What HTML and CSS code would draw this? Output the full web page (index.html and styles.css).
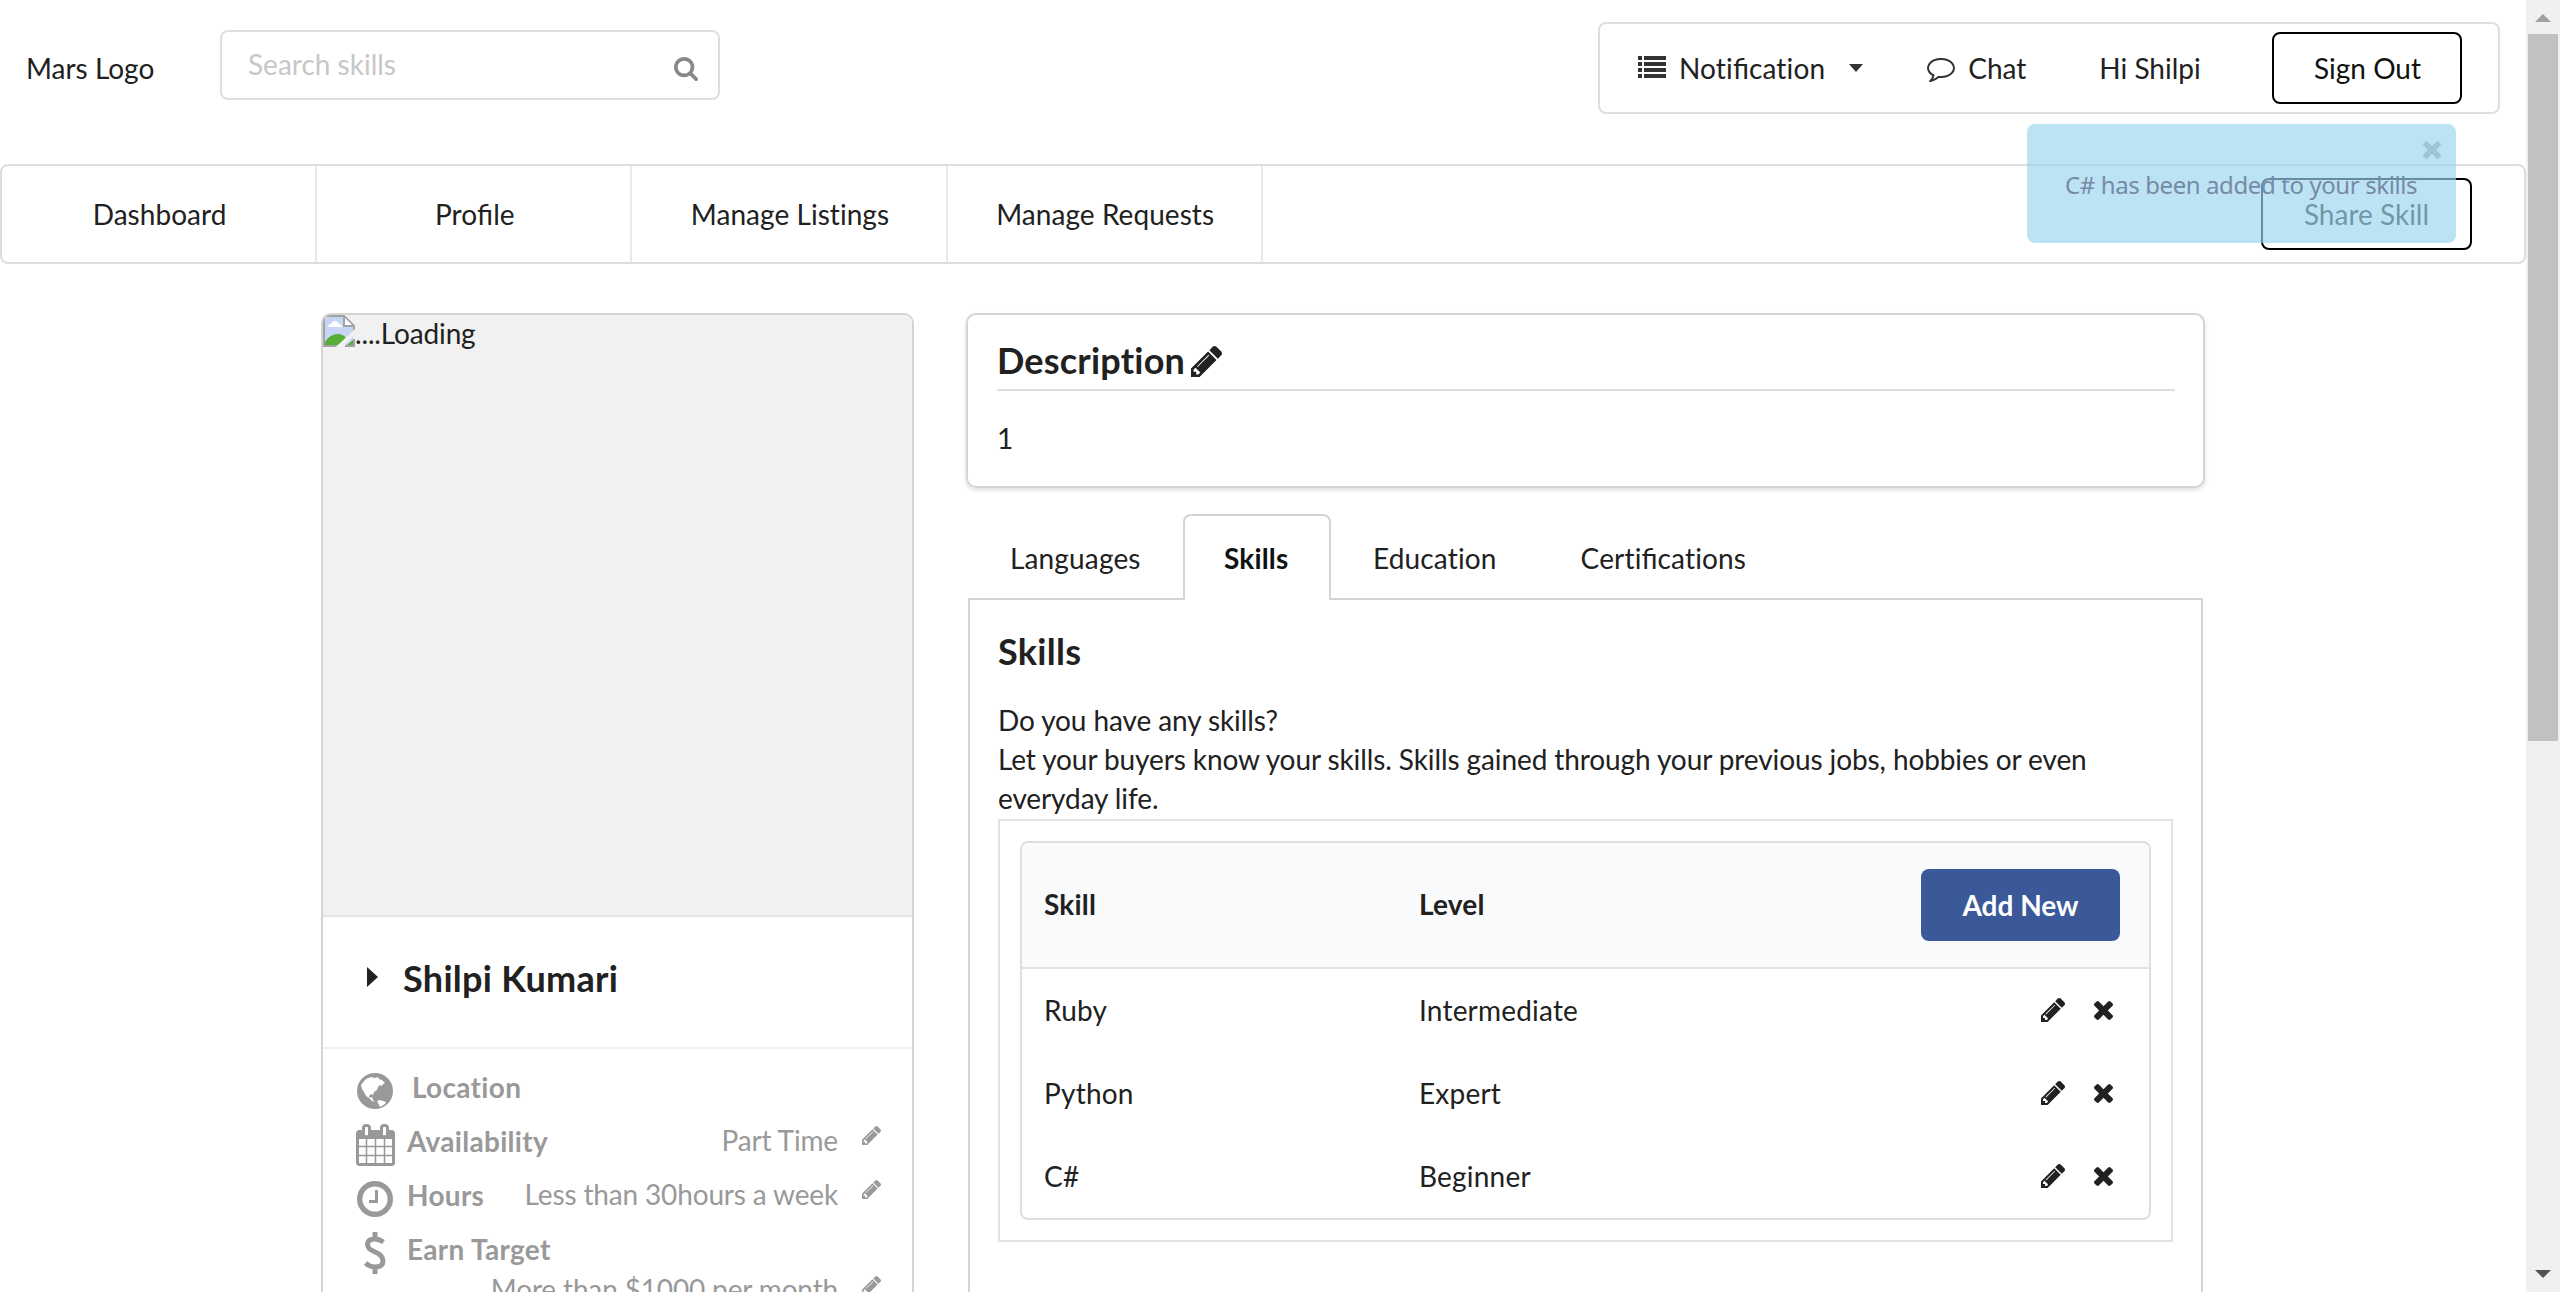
FILE: index.html
```html
<!DOCTYPE html>
<html lang="en">
<head>
<meta charset="utf-8">
<title>Profile</title>
<link rel="stylesheet" href="styles.css">
</head>
<body>
<svg class="sprite" aria-hidden="true">
  <symbol id="pencil" viewBox="128 149 1515 1515"><path d="M491 1536l91-91-235-235-91 91v107h128v128h107zm523-928q0-22-22-22-10 0-17 7l-542 542q-7 7-7 17 0 22 22 22 10 0 17-7l542-542q7-7 7-17zm-54-192l416 416-832 832h-416v-416zm683 96q0 53-37 90l-166 166-416-416 166-165q36-38 90-38 53 0 91 38l235 234q37 39 37 91z"/></symbol>
  <symbol id="times" viewBox="302 366 1188 1188"><path d="M1490 1322q0 40-28 68l-136 136q-28 28-68 28t-68-28l-294-294-294 294q-28 28-68 28t-68-28l-136-136q-28-28-28-68t28-68l294-294-294-294q-28-28-28-68t28-68l136-136q28-28 68-28t68 28l294 294 294-294q28-28 68-28t68 28l136 136q28 28 28 68t-28 68l-294 294 294 294q28 28 28 68z"/></symbol>
</svg>
<div class="window">
  <div class="page">
    <header class="top">
      <span class="logo">Mars Logo</span>
      <div class="search">
        <span>Search skills</span>
        <svg class="search-icon" viewBox="64 128 1664 1664"><path d="M1216 832q0-185-131.5-316.5t-316.5-131.5-316.5 131.5-131.5 316.5 131.5 316.5 316.5 131.5 316.5-131.5 131.5-316.5zm512 832q0 52-38 90t-90 38q-54 0-90-38l-343-342q-179 124-399 124-143 0-273.5-55.5t-225-150-150-225-55.5-273.5 55.5-273.5 150-225 225-150 273.5-55.5 273.5 55.5 225 150 150 225 55.5 273.5q0 220-124 399l343 343q37 37 37 90z"/></svg>
      </div>
      <div class="account">
        <svg class="list-icon" viewBox="0 0 28 22"><path d="M0 0h4v4H0zM6 0h22v4H6zM0 6h4v4H0zM6 6h22v4H6zM0 12h4v4H0zM6 12h22v4H6zM0 18h4v4H0zM6 18h22v4H6z"/></svg>
        <span class="notification">Noti<span class="lig">fi</span>cation</span>
        <svg class="caret" viewBox="0 0 14 8"><path d="M0 0h14L7 8z"/></svg>
        <svg class="chat-icon" viewBox="0 256 1792 1536"><path d="M896 384q-204 0-381.5 69.5t-282 187.5-104.5 255q0 112 71.5 213.5t201.5 175.5l87 50-27 96q-24 91-70 172 152-63 275-171l43-38 57 6q69 8 130 8 204 0 381.5-69.5t282-187.5 104.5-255-104.5-255-282-187.5-381.5-69.5zm896 512q0 174-120 321.5t-326 233-450 85.5q-70 0-145-8-198 175-460 242-49 14-114 22h-5q-15 0-27-10.5t-16-27.5v-1q-3-4-.5-12t2-10 4.5-9.5l6-9 7-8.5 8-9q7-8 31-34.5t34.5-38 31-39.5 32.5-51 27-59 26-76q-157-89-247.5-220t-90.5-281q0-174 120-321.5t326-233 450-85.5 450 85.5 326 233 120 321.5z"/></svg>
        <span class="chat">Chat</span>
        <span class="greeting">Hi Shilpi</span>
        <button class="outline sign-out">Sign Out</button>
      </div>
    </header>

    <nav class="nav">
      <a class="nav-item">Dashboard</a>
      <a class="nav-item"><span>Pro<span class="lig">fi</span>le</span></a>
      <a class="nav-item">Manage Listings</a>
      <a class="nav-item">Manage Requests</a>
      <button class="outline share">Share Skill</button>
    </nav>

    <main class="content">
      <aside class="card">
        <div class="photo">
          <svg class="broken" viewBox="0 0 32 32">
            <path fill="#c6d5f5" d="M2 2h19l9 9v19H2z"/>
            <path fill="#fff" d="M5 12q0-3 3-3 1-3 4-3t4 3q3 0 3 3z"/>
            <path fill="#56ae34" d="M2 30v-3q5-8 13-8 5 0 8 4l-8 7z"/>
            <path fill="#56ae34" d="M24 30l6-5v5z"/>
            <path fill="none" stroke="#a2a2a2" stroke-width="2" d="M31 16v-5L21 1H1v30h13M22 31h9v-7M21 1v10h10"/>
            <path fill="#fff" d="M22 3v7h7z"/>
            <path fill="#f1f1f1" d="M32 14v5L20 32h-7z"/>
          </svg><span>....Loading</span>
        </div>
        <div class="person">
          <svg class="person-caret" viewBox="0 0 11 20"><path d="M0 0l11 10L0 20z"/></svg>
          <h2>Shilpi Kumari</h2>
        </div>
        <ul class="facts">
          <li>
            <span class="fact-icon"><svg width="36" height="36" viewBox="0 0 36 36"><circle cx="18" cy="18" r="18"/><path fill="#fff" d="M8 7l3-2 4-1 2 1 4-1 1 2 3 1 3 3-2 1-1 2-2-1-2 2-1 3-3 2-1 3-2-1-2 2 1 2 2-1 1 3 2 2-3-1-3-3-3-2-2-4-2-3-1-4zM20 28l3-1 3 1 3 1-1 2-5 3-1-2z"/></svg></span>
            <b class="location">Location</b>
          </li>
          <li>
            <span class="fact-icon"><svg class="calendar" width="39" height="42" viewBox="0 0 1664 1792"><path d="M128 1664h288v-288h-288v288zm352 0h320v-288h-320v288zm-352-352h288v-320h-288v320zm352 0h320v-320h-320v320zm-352-384h288v-288h-288v288zm736 736h320v-288h-320v288zm-384-736h320v-288h-320v288zm768 736h288v-288h-288v288zm-384-352h320v-320h-320v320zm-352-864v-288q0-13-9.500-22.500t-22.500-9.500h-64q-13 0-22.500 9.500t-9.500 22.500v288q0 13 9.500 22.500t22.500 9.500h64q13 0 22.500-9.500t9.500-22.500zm736 864h288v-320h-288v320zm-384-384h320v-288h-320v288zm384 0h288v-288h-288v288zm32-480v-288q0-13-9.500-22.500t-22.500-9.500h-64q-13 0-22.500 9.500t-9.500 22.500v288q0 13 9.500 22.500t22.500 9.500h64q13 0 22.500-9.500t9.500-22.500zm384-64v1280q0 52-38 90t-90 38h-1408q-52 0-90-38t-38-90v-1280q0-52 38-90t90-38h128v-96q0-66 47-113t113-47h64q66 0 113 47t47 113v96h384v-96q0-66 47-113t113-47h64q66 0 113 47t47 113v96h128q52 0 90 38t38 90z"/></svg></span>
            <b>Availability</b>
            <span class="value">Part Time</span>
            <svg class="edit"><use href="#pencil"/></svg>
          </li>
          <li>
            <span class="fact-icon"><svg width="36" height="36" viewBox="0 0 36 36"><circle cx="18" cy="18" r="15.300" fill="none" stroke="#999" stroke-width="5.400"/><path fill="none" stroke="#999" stroke-width="3" d="M19.500 9v11.500H12"/></svg></span>
            <b>Hours</b>
            <span class="value">Less than 30hours a week</span>
            <svg class="edit"><use href="#pencil"/></svg>
          </li>
          <li class="earn">
            <span class="fact-icon"><svg class="dollar" width="22" height="42" viewBox="0 0 22 42"><path fill="none" stroke="#999" stroke-width="5" d="M11 0v6M11 36v6M19.500 10Q15 7 11 7 3.500 7 3.500 12.500 3.500 17 11 20 19 23 19 29 19 35 11 35 6 35 1.500 31"/></svg></span>
            <b>Earn Target</b>
            <span class="value">More than $1000 per month</span>
            <svg class="edit"><use href="#pencil"/></svg>
          </li>
        </ul>
      </aside>

      <section class="details">
        <div class="description">
          <h2>Description<svg class="desc-edit"><use href="#pencil"/></svg></h2>
          <p>1</p>
        </div>
        <div class="tabs">
          <a class="tab">Languages</a>
          <a class="tab active">Skills</a>
          <a class="tab">Education</a>
          <a class="tab">Certi<span class="lig">fi</span>cations</a>
        </div>
        <div class="panel">
          <h2>Skills</h2>
          <p>Do you have any skills?<br>Let your buyers know your skills. Skills gained through your previous jobs, hobbies or even<br>everyday life.</p>
          <div class="frame">
            <div class="table">
              <div class="row head"><b>Skill</b><b>Level</b><button class="add">Add New</button></div>
              <div class="row"><span>Ruby</span><span>Intermediate</span><span class="actions"><svg class="row-edit"><use href="#pencil"/></svg><svg class="row-x"><use href="#times"/></svg></span></div>
              <div class="row"><span>Python</span><span>Expert</span><span class="actions"><svg class="row-edit"><use href="#pencil"/></svg><svg class="row-x"><use href="#times"/></svg></span></div>
              <div class="row"><span>C#</span><span>Beginner</span><span class="actions"><svg class="row-edit"><use href="#pencil"/></svg><svg class="row-x"><use href="#times"/></svg></span></div>
            </div>
          </div>
        </div>
      </section>
    </main>
  </div>

  <div class="scrollbar">
    <svg class="arrow-up" viewBox="0 0 16 8"><path d="M0 8h16L8 0z"/></svg>
    <div class="thumb"></div>
    <svg class="arrow-down" viewBox="0 0 16 8"><path d="M0 0h16L8 8z"/></svg>
  </div>

  <div class="toast">
    <span>C# has been added to your skills</span>
    <svg class="toast-close"><use href="#times"/></svg>
  </div>
</div>
</body>
</html>
```
FILE: styles.css
```css
* { box-sizing: border-box; }
body {
  margin: 0;
  background: #fff;
  color: #212121;
  font: 28px/40px Lato, "Liberation Sans", sans-serif;
  font-variant-ligatures: none;
  overflow: hidden;
}
svg { display: block; flex: none; fill: currentColor; }
h2, p, ul { margin: 0; padding: 0; }
h2 { font-size: 36px; line-height: 46px; font-weight: 700; letter-spacing: .3px; }
button { font: inherit; font-variant-ligatures: none; padding: 0; }
.lig { font-variant-ligatures: common-ligatures; letter-spacing: 0; }
.sprite { position: absolute; width: 0; height: 0; }

.window { position: relative; display: flex; width: 2560px; height: 1292px; overflow: hidden; }
.page { width: 2526px; height: 1292px; overflow: hidden; }

/* top bar */
.top { display: flex; align-items: flex-start; height: 164px; padding: 22px 26px 0; }
.logo { width: 194px; padding-top: 26px; }
.search {
  display: flex; justify-content: space-between;
  width: 500px; height: 70px; margin-top: 8px; padding: 12px 20px 0 26px;
  border: 2px solid #dedede; border-radius: 8px; color: #c7c7c7;
}
.search-icon { width: 24px; height: 24px; margin-top: 13px; color: #888; }
.account {
  display: flex; align-items: center;
  width: 902px; height: 92px; margin-left: auto; padding: 0 36px 0 38px;
  border: 2px solid #dedede; border-radius: 8px;
}
.list-icon { width: 28px; height: 22px; margin: -2px 13px 0 0; color: #333; }
.notification { letter-spacing: .15px; }
.caret { width: 14px; height: 8px; margin-left: 24px; color: #333; }
.chat-icon { width: 28px; height: 24px; margin: 3px 13px 0 64px; color: #333; }
.greeting { margin-left: 73px; }
.outline { border: 2px solid #000; border-radius: 8px; background: none; color: #111; height: 72px; }
.sign-out { width: 190px; margin-left: auto; padding-left: 1px; }

/* navigation */
.nav { display: flex; align-items: center; height: 100px; border: 2px solid #dedede; border-radius: 8px; }
.nav-item {
  display: flex; align-items: center; justify-content: center;
  width: 315.2px; height: 96px; padding-left: 2px; border-right: 2px solid #e8e8e8; letter-spacing: .05px;
}
.share { width: 211px; margin: 0 52px 0 auto; color: #212121; }

/* profile card */
.content { display: flex; align-items: flex-start; padding: 49px 0 0 321px; }
.card {
  width: 593px; height: 1010px; border: 2px solid #d4d4d5; border-radius: 10px; overflow: hidden;
}
.photo { display: flex; height: 602px; background: #f1f1f1; border-bottom: 2px solid #e4e4e4; }
.photo span { margin-top: -2px; letter-spacing: -.15px; }
.broken { width: 32px; height: 32px; }
.person { display: flex; height: 132px; padding: 38px 0 0 44px; border-bottom: 2px solid #f0f0f0; }
.person-caret { width: 11px; height: 20px; margin: 12px 25px 0 0; }
.facts { list-style: none; padding: 18px 31px 0 32px; color: #999; }
.facts li { display: flex; flex-wrap: wrap; height: 54px; }
.facts b { letter-spacing: .3px; }
.fact-icon { display: flex; justify-content: center; width: 40px; height: 50px; margin-right: 12px; padding-top: 6px; }
.calendar, .dollar { margin-top: -3px; }
.facts .location { margin-left: 5px; }
.value { margin: -1px 0 0 auto; letter-spacing: -.15px; }
.edit { width: 19px; height: 19px; margin: 5px 0 0 24px; }
.earn .value { margin-top: -10px; }
.earn .edit { margin-top: -3px; }

/* description */
.details { width: 1239px; margin-left: 52px; }
.description {
  height: 175px; padding: 22px 28px 0 29px;
  border: 2px solid #d4d4d5; border-radius: 10px; box-shadow: 0 2px 4px rgba(34,36,38,.15);
}
.description h2 { display: flex; height: 54px; border-bottom: 2px solid #dedede; letter-spacing: .2px; }
.desc-edit { width: 31px; height: 31px; margin: 9px 0 0 6px; }
.description p { padding-top: 27px; }

/* tabs */
.tabs { display: flex; height: 86px; margin: 26px 0 -2px 2px; position: relative; }
.tab { padding: 24px 42px 0; height: 86px; letter-spacing: .15px; }
.tab:first-child { width: 215px; padding-right: 0; }
.tab.active {
  width: 148px; padding: 22px 0 0 39px; background: #fff; color: #111; font-weight: 700;
  border: 2px solid #d4d4d5; border-bottom: 0; border-radius: 8px 8px 0 0;
}
.panel { height: 760px; margin: 0 2px; padding: 28px 28px 0; border: 2px solid #d4d4d5; }
.panel p { margin-top: 27px; line-height: 39.200px; letter-spacing: -.1px; }

/* skills table */
.frame { height: 423px; padding: 20px; border: 2px solid #e2e2e2; }
.table { height: 379px; border: 2px solid #dedede; border-radius: 8px; overflow: hidden; }
.row { display: grid; grid-template-columns: 375px 1fr auto; align-items: center; height: 83px; padding: 0 29px 0 22px; letter-spacing: .2px; }
.row.head { height: 126px; background: #f9fafb; border-bottom: 2px solid #e2e2e2; }
.row.head b { padding-bottom: 2px; }
.add { width: 199px; height: 72px; border: 0; border-radius: 8px; background: #3b5998; color: #fff; font-weight: 700; letter-spacing: 0; }
.actions { display: flex; align-items: center; gap: 29px; padding-right: 7px; }
.row-edit { width: 24px; height: 24px; }
.row-x { width: 19px; height: 19px; }

/* scrollbar */
.scrollbar {
  display: flex; flex-direction: column; align-items: center;
  width: 34px; height: 1292px; padding: 14px 0; background: #f0f0f0;
}
.arrow-up { width: 16px; height: 8px; color: #a0a0a0; }
.thumb { width: 30px; height: 707px; margin-top: 12px; background: #c1c1c1; }
.arrow-down { width: 16px; height: 8px; margin-top: auto; color: #505050; }

/* toast laid over the navigation */
.toast {
  position: absolute; left: 2027px; top: 124px; width: 429px; height: 119px;
  padding: 41px 0 0 38px; border-radius: 8px; background: rgba(153,213,238,.66);
  color: #768aa6; font: 24px/40px "Noto Sans", sans-serif; letter-spacing: -.4px; white-space: nowrap;
}
.toast-close { position: absolute; right: 15px; top: 17px; width: 18px; height: 18px; color: #9fc4d6; }
```
